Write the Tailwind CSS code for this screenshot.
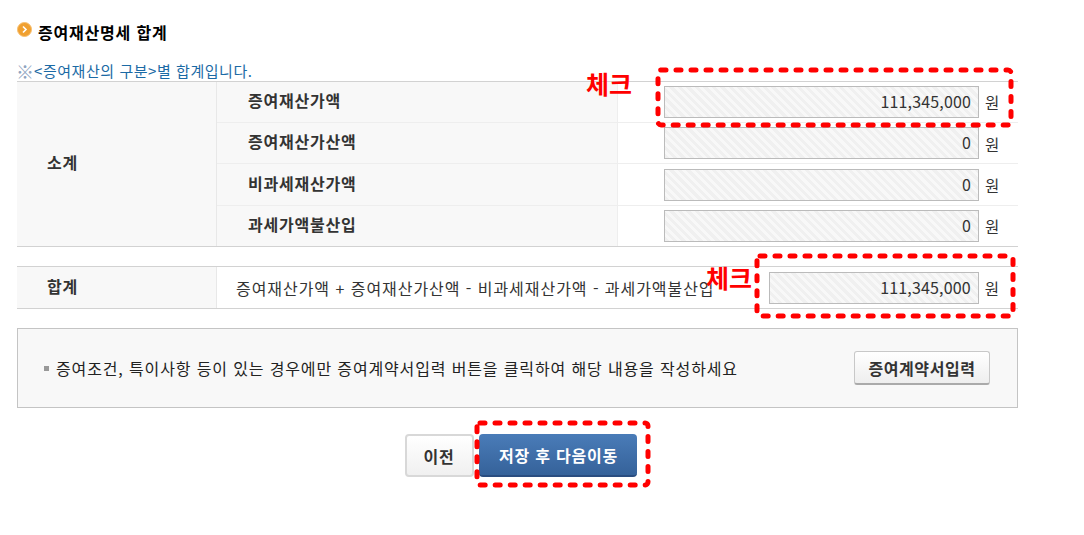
<!doctype html>
<html lang="ko">
<head>
<meta charset="UTF-8" />
<title>증여재산명세 합계</title>
<script src="https://cdn.jsdelivr.net/npm/@tailwindcss/browser@4"></script>
</head>
<body class="bg-white font-['Noto_Sans_CJK_KR','Liberation_Sans',sans-serif] text-[#333]">
<div class="relative w-[1084px] h-[535px] overflow-hidden pl-[17px]">
	<div class="w-[1001px]">
		<!-- title -->
		<div class="flex items-center h-[26px] mt-[19px] gap-[6px]">
			<span class="w-[15px] h-[15px] rounded-full bg-[#f0a030] border border-[#f8c070] flex items-center justify-center -mt-[6px]">
				<svg width="9" height="9" viewBox="0 0 9 9"><path d="M3 1.5 L6 4.5 L3 7.5" fill="none" stroke="#fff" stroke-width="1.6"/></svg>
			</span>
			<h2 class="text-[16px] tracking-[0.8px] leading-[26px] font-bold text-black">증여재산명세 합계</h2>
		</div>
		<p class="mt-[16px] h-[20px] text-[15px] tracking-[0.55px] leading-[20px] text-[#1b6aa5] flex items-center">
			<span class="text-[#8ea4c0] shrink-0 w-[18px] text-[18px] leading-[20px] tracking-normal -ml-[1px]">※</span><span>&lt;증여재산의 구분&gt;별 합계입니다.</span>
		</p>

		<!-- 소계 table -->
		<div class="grid grid-cols-[200px_401px_400px] border-t border-b border-[#d2d2d2]">
			<div class="row-span-4 bg-[#f8f8f8] border-r border-[#e8e8e8] flex items-center pl-[30px] pb-[4px] text-[16px] tracking-[0.8px] font-bold">소계</div>
			<div class="h-[41px] bg-[#f8f8f8] border-r border-b border-[#eeeeee] flex items-center pl-[31px] pb-[4px] text-[16px] tracking-[0.8px] font-bold">증여재산가액</div>
			<div class="h-[41px] border-b border-[#eeeeee] flex items-center pl-[46px] gap-[6px]">
				<div class="w-[315px] h-[32px] border border-[#bbbbbb] bg-[repeating-linear-gradient(45deg,#f0f0f0_0,#f0f0f0_3px,#f8f8f8_3px,#f8f8f8_6px)] text-right pr-[7px] text-[16px] tracking-[0.15px] leading-[28px]">111,345,000</div>
				<span class="text-[15.5px] mt-[2px]">원</span>
			</div>
			<div class="h-[41px] bg-[#f8f8f8] border-r border-b border-[#eeeeee] flex items-center pl-[31px] pb-[4px] text-[16px] tracking-[0.8px] font-bold">증여재산가산액</div>
			<div class="h-[41px] border-b border-[#eeeeee] flex items-center pl-[46px] gap-[6px]">
				<div class="w-[315px] h-[32px] border border-[#bbbbbb] bg-[repeating-linear-gradient(45deg,#f0f0f0_0,#f0f0f0_3px,#f8f8f8_3px,#f8f8f8_6px)] text-right pr-[7px] text-[16px] tracking-[0.15px] leading-[28px]">0</div>
				<span class="text-[15.5px] mt-[4px]">원</span>
			</div>
			<div class="h-[42px] bg-[#f8f8f8] border-r border-b border-[#eeeeee] flex items-center pl-[31px] pb-[4px] text-[16px] tracking-[0.8px] font-bold">비과세재산가액</div>
			<div class="h-[42px] border-b border-[#eeeeee] flex items-center pl-[46px] gap-[6px]">
				<div class="w-[315px] h-[32px] border border-[#bbbbbb] bg-[repeating-linear-gradient(45deg,#f0f0f0_0,#f0f0f0_3px,#f8f8f8_3px,#f8f8f8_6px)] text-right pr-[7px] text-[16px] tracking-[0.15px] leading-[28px]">0</div>
				<span class="text-[15.5px] mt-[2px]">원</span>
			</div>
			<div class="h-[40px] bg-[#f8f8f8] border-r border-[#eeeeee] flex items-center pl-[31px] pb-[4px] text-[16px] tracking-[0.8px] font-bold">과세가액불산입</div>
			<div class="h-[40px] flex items-center pl-[46px] gap-[6px]">
				<div class="w-[315px] h-[32px] border border-[#bbbbbb] bg-[repeating-linear-gradient(45deg,#f0f0f0_0,#f0f0f0_3px,#f8f8f8_3px,#f8f8f8_6px)] text-right pr-[7px] text-[16px] tracking-[0.15px] leading-[28px]">0</div>
				<span class="text-[15.5px] mt-[2px]">원</span>
			</div>
		</div>

		<!-- 합계 table -->
		<div class="mt-[19px] h-[43px] flex border-t border-b border-[#d2d2d2]">
			<div class="w-[200px] bg-[#f8f8f8] border-r border-[#e8e8e8] flex items-center pl-[30px] pb-[4px] text-[16px] tracking-[0.8px] font-bold">합계</div>
			<div class="flex-1 flex items-center pl-[19px] text-[16px] tracking-[0.95px] whitespace-nowrap">증여재산가액 + 증여재산가산액 - 비과세재산가액 - 과세가액불산입</div>
			<div class="flex items-center gap-[6px] pr-[19px]">
				<div class="w-[210px] h-[32px] border border-[#bbbbbb] bg-[repeating-linear-gradient(45deg,#f0f0f0_0,#f0f0f0_3px,#f8f8f8_3px,#f8f8f8_6px)] text-right pr-[7px] text-[16px] tracking-[0.15px] leading-[28px]">111,345,000</div>
				<span class="text-[15.5px] mt-[2px]">원</span>
			</div>
		</div>

		<!-- notice box -->
		<div class="mt-[19px] h-[80px] border border-[#c4c4c4] bg-[#f8f8f8] flex items-center pl-[26px] pr-[27px]">
			<span class="w-[5px] h-[5px] bg-[#999] mr-[7px]"></span>
			<span class="text-[16px] tracking-[0.86px] text-[#222] whitespace-nowrap">증여조건, 특이사항 등이 있는 경우에만 증여계약서입력 버튼을 클릭하여 해당 내용을 작성하세요</span>
			<button class="ml-auto w-[136px] h-[34px] rounded-[3px] border border-[#c8c8c8] border-b-2 border-b-[#aaaaaa] bg-linear-to-b from-white to-[#eeeeee] text-[16px] tracking-[0.6px] font-bold whitespace-nowrap">증여계약서입력</button>
		</div>

		<!-- buttons -->
		<div class="mt-[26px] flex justify-center gap-[5px] pl-[6px]">
			<button class="w-[69px] h-[43px] rounded-[4px] border-2 border-[#d8d8d8] bg-linear-to-b from-white to-[#f0f0f0] text-[16px] tracking-[0.8px] font-bold">이전</button>
			<button class="w-[158px] h-[43px] pl-[2px] rounded-[4px] border-b-2 border-[#2a4d80] bg-linear-to-b from-[#4a7cb8] to-[#35629a] text-white text-[16px] tracking-[0.8px] font-bold">저장 후 다음이동</button>
		</div>
	</div>

	<!-- red annotation overlays -->
	<svg class="absolute left-0 top-0 pointer-events-none" width="1084" height="535" fill="none">
		<g stroke="#ff0000" stroke-width="5" stroke-linecap="round" stroke-dasharray="5 10">
			<rect x="658" y="70" width="353" height="55" rx="3"/>
			<rect x="757" y="256" width="256" height="60" rx="3"/>
			<rect x="477" y="423" width="171" height="62" rx="3"/>
		</g>
	</svg>
	<span class="absolute left-[586px] top-[66px] text-[25px] leading-[34px] font-bold text-[#ff0000]">체크</span>
	<span class="absolute left-[706px] top-[260px] text-[25px] leading-[34px] font-bold text-[#ff0000]">체크</span>
</div>
</body>
</html>
